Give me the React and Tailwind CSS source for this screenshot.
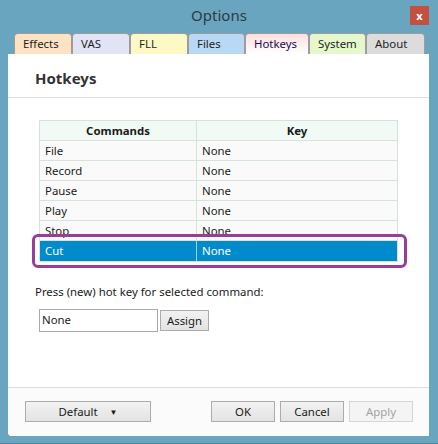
const tabs = [
  { label: "Effects", w: "w-[58px]", bg: "bg-[#fde3c3]" },
  { label: "VAS", w: "w-[58px]", bg: "bg-[#e3e3f6]" },
  { label: "FLL", w: "w-[58px]", bg: "bg-[#fdf9c5]" },
  { label: "Files", w: "w-[57px]", bg: "bg-[#b9d8f3]" },
  { label: "Hotkeys", w: "w-[64px]", bg: "bg-gradient-to-b from-[#fcdede] to-white", active: true },
  { label: "System", w: "w-[57px]", bg: "bg-[#e5f8cb]" },
  { label: "About", w: "w-[59px]", bg: "bg-[#dcdcdc]" },
];

const commands = ["File", "Record", "Pause", "Play", "Stop", "Cut"];

function Button({ children, className = "", disabled }) {
  return (
    <div
      className={
        "h-[21px] flex items-center justify-center border text-[11.4px] " +
        (disabled
          ? "border-[#d5d5d5] bg-[#f4f4f4] text-[#a3a3a3] "
          : "border-[#acacac] bg-gradient-to-b from-[#f2f2f2] to-[#e3e3e3] text-[#1a1a1a] ") +
        className
      }
    >
      {children}
    </div>
  );
}

export default function App() {
  return (
    <div
      className="relative w-[438px] h-[444px] bg-[#6aa5bf] border-b border-[#4f8aa4] flex flex-col"
      style={{ fontFamily: '"Noto Sans", "Open Sans", sans-serif' }}
    >
      {/* title bar */}
      <div className="h-[33px] flex items-center justify-center text-[15px] text-[#2c3b45] pb-[2px]">
        Options
      </div>
      <div className="absolute top-[6px] left-[410px] w-[19px] h-[19px] bg-[#c4503f] flex items-center justify-center text-white text-[11px] font-bold leading-none">
        x
      </div>

      {/* tabs */}
      <div className="flex pl-[14px] h-[21px]">
        {tabs.map((t) => (
          <div
            key={t.label}
            className={
              "h-[21px] border border-b-0 border-[#9c9c9c] rounded-t-[4px] pl-[8px] text-[11.4px] leading-[20px] " +
              t.w + " " + t.bg + " " +
              (t.active ? "text-[#1c0b55]" : "text-[#1e1e1e]")
            }
          >
            {t.label}
          </div>
        ))}
      </div>

      {/* panel */}
      <div className="relative ml-[8px] w-[421px] h-[382px] bg-white rounded-bl-[4px] flex flex-col text-[11.4px] text-[#1a1a1a]">
        <div className="h-[44px] border-b border-[#dedede] pl-[27px] pt-[13px] text-[15px] font-bold text-[#333]">
          Hotkeys
        </div>

        {/* table */}
        <div className="ml-[31px] mt-[22px] w-[359px] border border-[#d6e2dc]">
          <div className="flex h-[20px] bg-[#f1faf4] font-bold border-b border-[#d6e2dc]">
            <div className="w-[157px] border-r border-[#d6e2dc] text-center leading-[19px]">Commands</div>
            <div className="flex-1 text-center leading-[19px]">Key</div>
          </div>
          {commands.map((c) => {
            const sel = c === "Cut";
            return (
              <div
                key={c}
                className={
                  "flex h-[20px] leading-[19px] " +
                  (sel ? "bg-[#028bcb] text-white" : "bg-[#fafafa] border-b border-[#d6e2dc]")
                }
              >
                <div className={"w-[157px] pl-[5px] border-r " + (sel ? "border-[#9fd0ea]" : "border-[#d6e2dc]")}>{c}</div>
                <div className="flex-1 pl-[5px]">None</div>
              </div>
            );
          })}
        </div>

        {/* highlight */}
        <div className="absolute left-[24px] top-[180px] w-[375px] h-[34px] border-[3px] border-[#983d9a] rounded-[6px]" />

        <div className="ml-[27px] mt-[22px] leading-[16px]">Press (new) hot key for selected command:</div>

        <div className="flex items-start ml-[31px] mt-[9px] gap-[2px]">
          <div className="w-[119px] h-[23px] border border-[#a9a9a9] pl-[2px] leading-[20px]">None</div>
          <Button className="w-[49px] mt-[1px]">Assign</Button>
        </div>

        {/* footer */}
        <div className="mt-auto h-[49px] border-t border-[#dcdcdc] bg-[#fbfbfb] rounded-bl-[4px] flex items-start pt-[13px] pl-[17px]">
          <Button className="w-[126px] gap-[12px]">
            <span>Default</span>
            <span className="text-[8px]">▼</span>
          </Button>
          <Button className="w-[64px] ml-[60px]">OK</Button>
          <Button className="w-[64px] ml-[5px]">Cancel</Button>
          <Button className="w-[64px] ml-[5px]" disabled>Apply</Button>
        </div>
      </div>
    </div>
  );
}
